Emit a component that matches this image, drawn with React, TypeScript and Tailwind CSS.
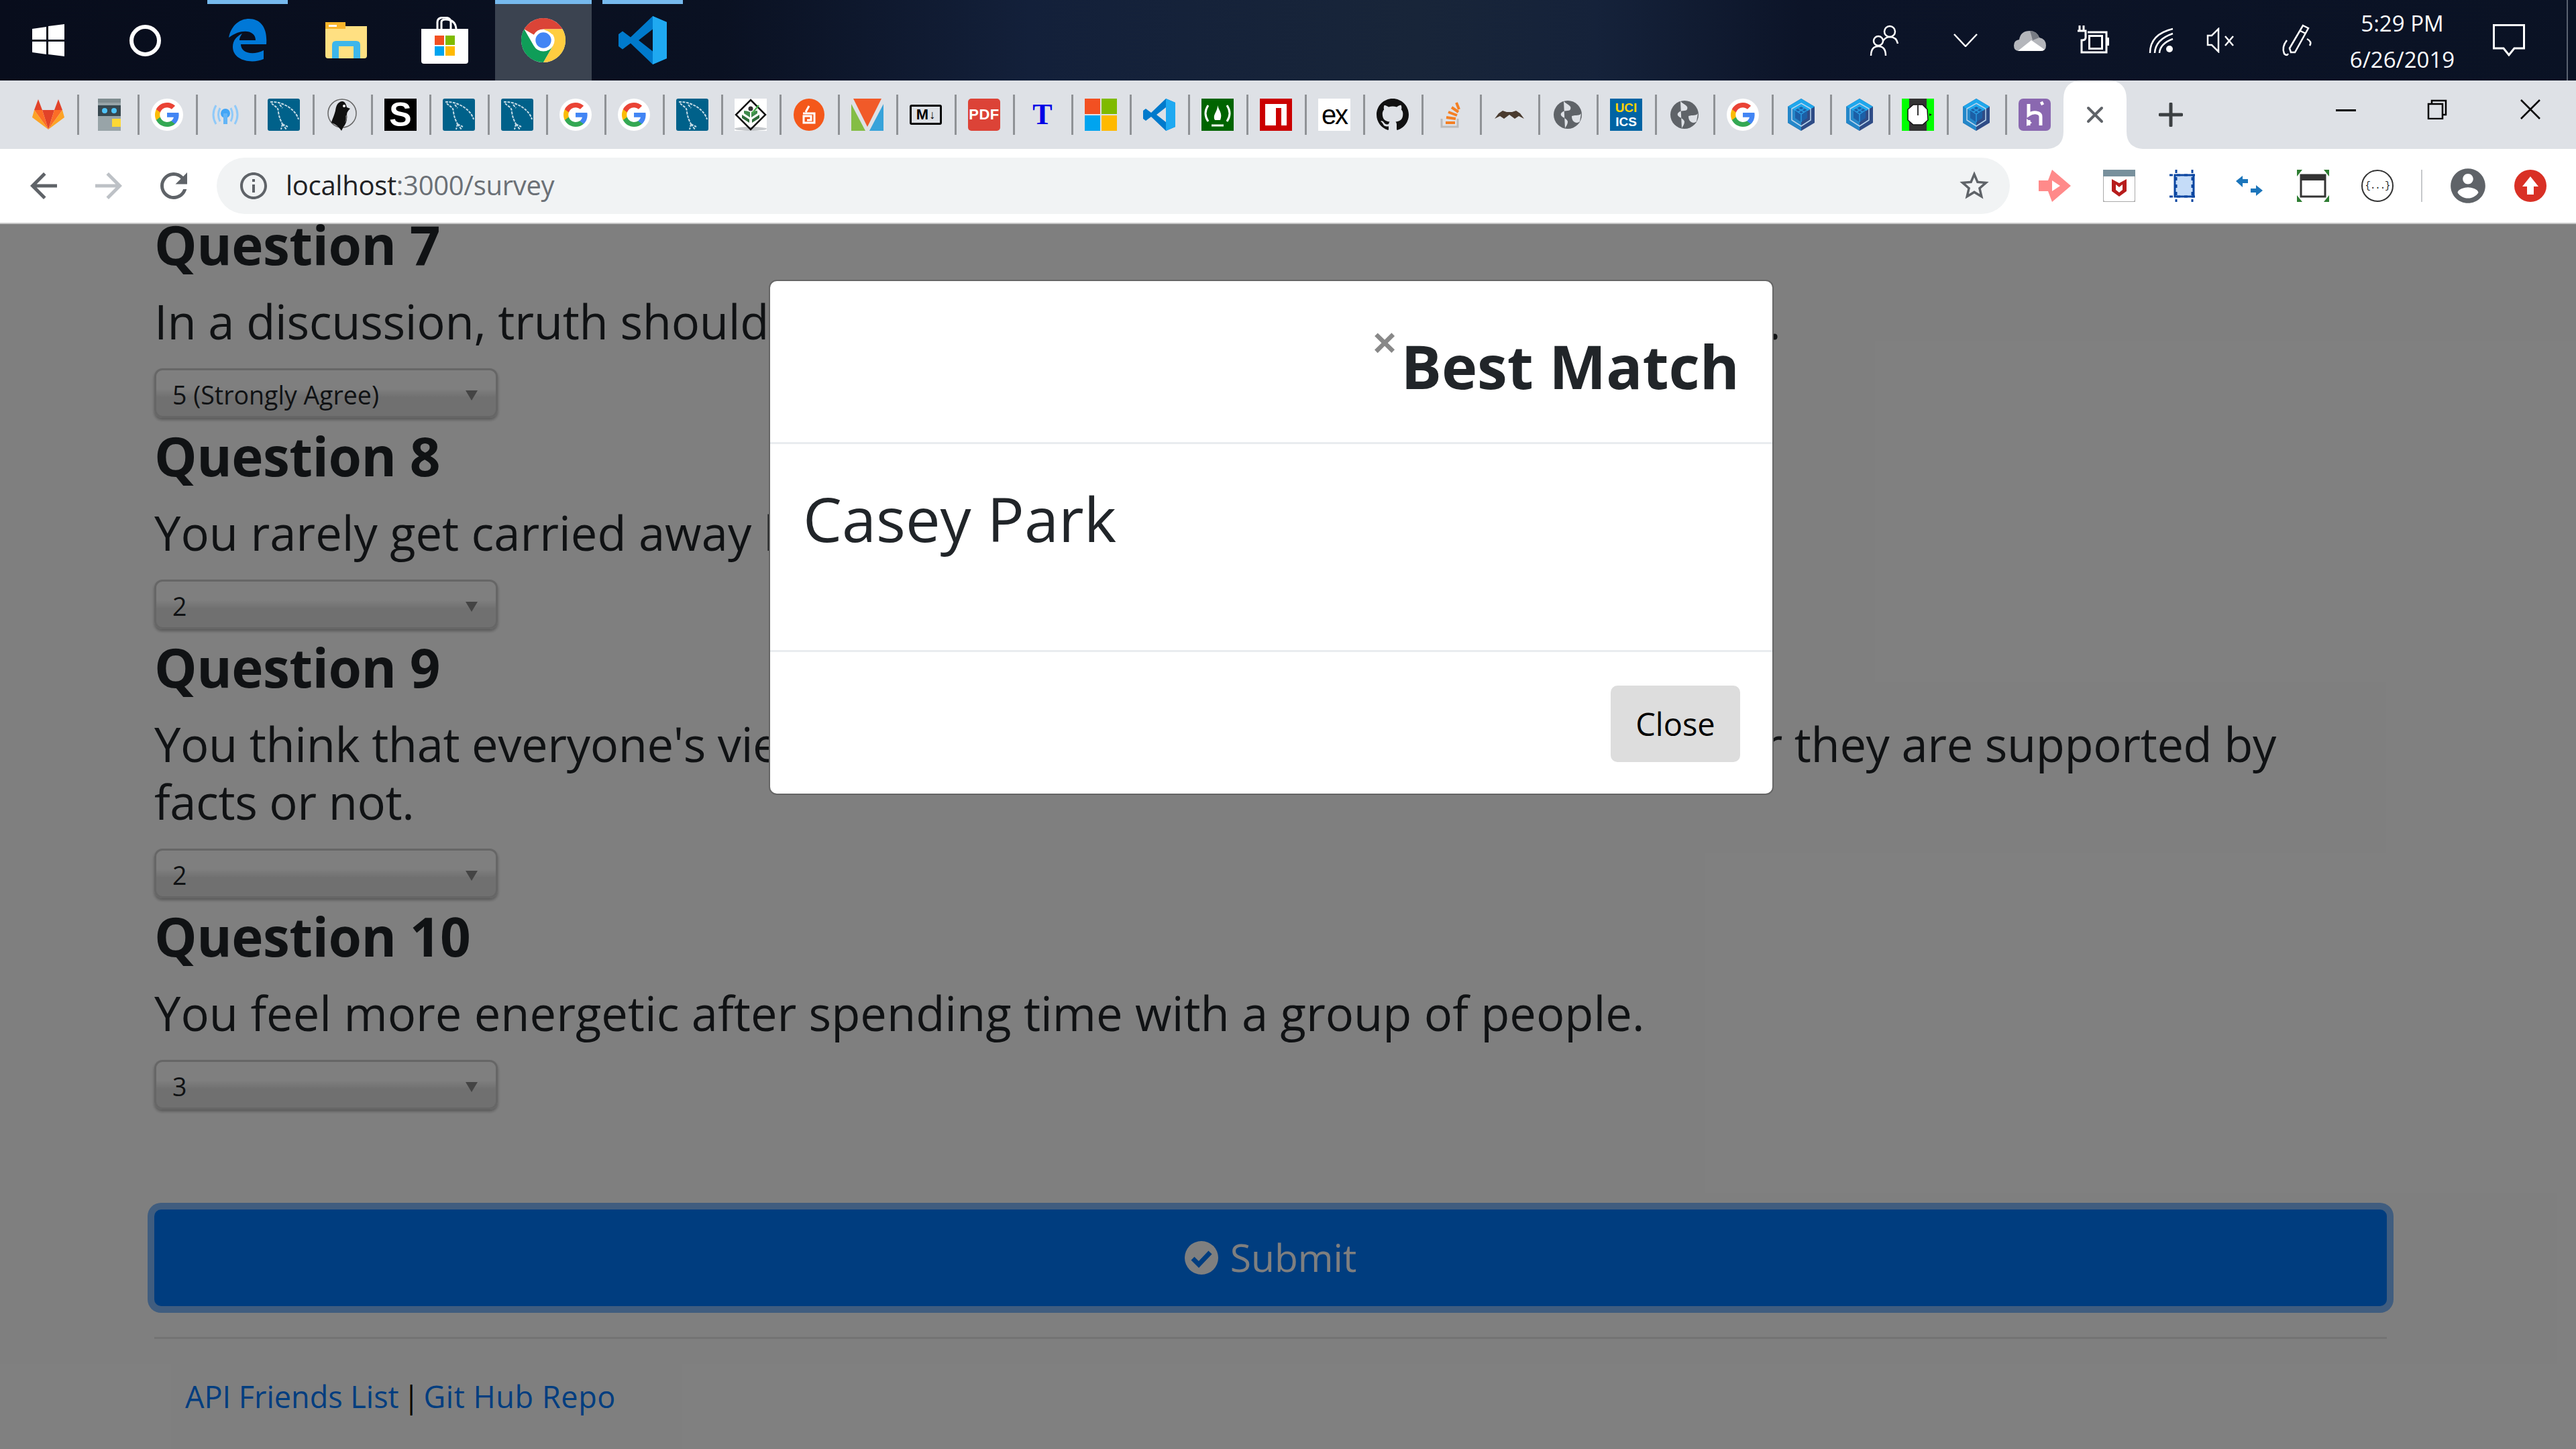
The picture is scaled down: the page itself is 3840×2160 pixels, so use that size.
import type { ReactNode } from 'react';

const FONT = 'font-["Open_Sans","Noto_Sans",sans-serif]';

function Svg({ children, w = 48, h = 48, className = '' }: { children: ReactNode; w?: number; h?: number; className?: string }) {
  return (
    <svg width={w} height={h} viewBox={`0 0 ${w} ${h}`} className={`block shrink-0 ${className}`}>
      {children}
    </svg>
  );
}

const Material = ({ d, size, color }: { d: string; size: number; color: string }) => (
  <svg width={size} height={size} viewBox="0 0 24 24" className="block shrink-0">
    <path d={d} fill={color} />
  </svg>
);

/* bookmark favicons */
const GitLab = () => (
  <Svg>
    <polygon points="24,46 15,17 33,17" fill="#e24329" />
    <polygon points="24,46 15,17 3,17" fill="#fc6d26" />
    <polygon points="24,46 33,17 45,17" fill="#fc6d26" />
    <polygon points="3,17 0,28 24,46" fill="#fca326" />
    <polygon points="45,17 48,28 24,46" fill="#fca326" />
    <polygon points="3,17 9,1 15,17" fill="#e24329" />
    <polygon points="45,17 39,1 33,17" fill="#e24329" />
  </Svg>
);
const Robot = () => (
  <Svg>
    <rect x="8" y="0" width="34" height="48" fill="#98a4a8" />
    <rect x="8" y="0" width="34" height="6" fill="#7f8c90" />
    <rect x="8" y="10" width="34" height="16" fill="#37474f" />
    <circle cx="18" cy="18" r="4" fill="#4fc3f7" />
    <circle cx="32" cy="18" r="4" fill="#4fc3f7" />
    <rect x="29" y="30" width="13" height="12" fill="#fdd835" />
  </Svg>
);
const Google = () => (
  <Svg>
    <ellipse cx="24" cy="24" rx="24" ry="24" fill="#fff" />
    <g transform="translate(6 6) scale(0.75)">
      <path d="M47.5 24.6c0-1.6-.1-3.1-.4-4.6H24v8.900h13.200c-.6 3-2.300 5.600-4.900 7.300v6h7.900c4.600-4.300 7.300-10.500 7.300-17.600z" fill="#4285f4" />
      <path d="M24 48c6.500 0 11.900-2.100 15.900-5.800l-7.900-6c-2.100 1.400-4.900 2.300-8 2.300-6.300 0-11.600-4.200-13.500-9.900H2.400v6.200C6.300 42.600 14.500 48 24 48z" fill="#34a853" />
      <path d="M10.500 28.600c-.5-1.400-.8-3-.8-4.600s.3-3.200.8-4.600v-6.200H2.400C.9 16.500 0 20.100 0 24s.9 7.500 2.400 10.800l8.100-6.200z" fill="#fbbc05" />
      <path d="M24 9.500c3.500 0 6.700 1.200 9.200 3.600l6.900-6.900C35.900 2.400 30.500 0 24 0 14.500 0 6.300 5.400 2.400 13.200l8.100 6.200C12.400 13.700 17.700 9.500 24 9.500z" fill="#ea4335" />
    </g>
  </Svg>
);
const Signal = () => (
  <Svg>
    <path d="M10 10 Q2 24 10 38 M16 14 Q11 24 16 34 M38 10 Q46 24 38 38 M32 14 Q37 24 32 34" fill="none" stroke="#90caf9" strokeWidth="3" />
    <circle cx="24" cy="22" r="7" fill="#42a5f5" />
    <rect x="21" y="22" width="6" height="16" fill="#64b5f6" />
  </Svg>
);
const MySql = () => (
  <Svg>
    <rect width="48" height="48" rx="3" fill="#00618a" />
    <path d="M4 5 C16 4 30 10 38 18 C42 22 45 27 46 31 M6 7 C10 12 16 12 16 20 C17 28 20 34 22 38 M22 38 L20 46 M22 38 L28 46 M22 38 L30 42 M18 9 L22 14" fill="none" stroke="#c6dce6" strokeWidth="2" strokeDasharray="4 1.500" />
  </Svg>
);
const Penguin = () => (
  <Svg>
    <circle cx="24" cy="22" r="21" fill="none" stroke="#666" strokeWidth="1.500" />
    <path d="M24 4 C17 5 15 11 14 18 C12 26 9 31 8 36 C12 37 18 40 23 48 L26 42 C30 38 32 30 31 24 C31 20 33 18 36 15 L31 13 C30 8 28 4 24 4Z" fill="#111" />
    <circle cx="27" cy="11" r="2" fill="#fff" />
    <path d="M31 24 Q32 32 28 36 Q30 30 29 26Z" fill="#666" />
  </Svg>
);
const SBlack = () => (
  <div className="flex h-12 w-12 shrink-0 items-center justify-center bg-black font-['Liberation_Sans',sans-serif] text-[50px] leading-none font-bold text-white">S</div>
);
const Diamond = () => (
  <Svg>
    <rect x="0" y="0" width="48" height="48" fill="#fff" />
    <ellipse cx="24" cy="45" rx="24" ry="3" fill="#c5c8cc" />
    <polygon points="24,2 46,24 24,46 2,24" fill="none" stroke="#111" strokeWidth="2.500" />
    <path d="M11 24 L22 31 V36 L11 29Z M37 24 L26 31 V36 L37 29Z" fill="#2e6b3a" />
    <path d="M14 22 L23 28 V20 Q19 18 14 18Z M34 22 L25 28 V20 Q29 18 34 18Z" fill="#3f8a4d" />
    <circle cx="24" cy="15" r="3.500" fill="#333" />
    <path d="M26 22 L36 10" stroke="#4caf50" strokeWidth="2.500" />
  </Svg>
);
const OrangeCircle = () => (
  <Svg>
    <ellipse cx="24" cy="24" rx="23" ry="24" fill="#f4581a" />
    <path d="M24 11 L19 20 M15 22 H32 V36 H16 V26 H27 V32 H21" fill="none" stroke="#fff" strokeWidth="3" />
  </Svg>
);
const VeeTile = () => (
  <Svg>
    <polygon points="0,8 0,48 21,48" fill="#84bd45" />
    <polygon points="48,8 48,48 27,48" fill="#37a3da" />
    <polygon points="3,0 45,0 24,42" fill="#f15a29" />
  </Svg>
);
const MarkDown = () => (
  <div className="flex h-[30px] w-12 shrink-0 items-center justify-center gap-px rounded-[3px] border-[3px] border-black font-['Liberation_Sans',sans-serif] text-[22px] leading-none font-bold text-black">
    M<span className="text-[18px]">↓</span>
  </div>
);
const Pdf = () => (
  <div className="flex h-12 w-12 shrink-0 items-center justify-center rounded-[5px] bg-[#dc4337] font-['Liberation_Sans',sans-serif] text-[22px] leading-none font-bold tracking-[0.5px] text-white">PDF</div>
);
const SerifT = () => (
  <div className="flex h-12 w-12 shrink-0 items-center justify-center font-['Liberation_Serif',serif] text-[44px] leading-none font-bold text-[#0000e6]">T</div>
);
const Microsoft = () => (
  <Svg>
    <rect width="23" height="23" fill="#f25022" />
    <rect x="25" width="23" height="23" fill="#7fba00" />
    <rect y="25" width="23" height="23" fill="#00a4ef" />
    <rect x="25" y="25" width="23" height="23" fill="#ffb900" />
  </Svg>
);
const VsCode = ({ size = 48 }: { size?: number }) => (
  <svg width={size} height={size} viewBox="0 0 48 48" className="block shrink-0">
    <path d="M34 0 L48 6 V42 L34 48 L12 27 L4 33 L0 30 V18 L4 15 L12 21Z M34 13 L20 24 L34 35Z" fill="#007acc" fillRule="evenodd" />
    <path d="M34 0 L48 6 V42 L34 48Z" fill="#1fa9f1" />
  </svg>
);
const FreeCode = () => (
  <div className="flex h-12 w-12 shrink-0 items-center justify-center bg-[#006400]">
    <svg width="48" height="48" viewBox="0 0 48 48">
      <path d="M10 10 Q2 22 10 34 M38 10 Q46 22 38 34 M15 40 H33" fill="none" stroke="#fff" strokeWidth="3" />
      <path d="M24 10 C26 18 32 22 28 32 H20 C16 24 24 20 24 10Z" fill="#fff" />
    </svg>
  </div>
);
const Npm = () => (
  <Svg>
    <rect width="48" height="48" fill="#cb0000" />
    <rect x="8" y="8" width="32" height="32" fill="#fff" />
    <rect x="24" y="14" width="8" height="26" fill="#cb0000" />
  </Svg>
);
const Express = () => (
  <div className="flex h-12 w-12 shrink-0 items-center justify-center bg-white font-['Liberation_Sans',sans-serif] text-[40px] leading-none tracking-[-2px] text-black">ex</div>
);
const GitHub = () => (
  <svg width="48" height="48" viewBox="0 0 16 16" className="block shrink-0">
    <path fill="#111" d="M8 0C3.580 0 0 3.580 0 8c0 3.540 2.290 6.530 5.470 7.590.4.070.55-.17.55-.38 0-.19-.01-.82-.01-1.490-2.010.37-2.530-.49-2.690-.94-.09-.23-.48-.94-.82-1.130-.28-.15-.68-.52-.01-.53.63-.01 1.080.58 1.230.82.720 1.210 1.870.870 2.330.660.070-.520.280-.870.510-1.070-1.780-.2-3.640-.890-3.640-3.950 0-.870.310-1.590.820-2.150-.08-.2-.36-1.020.08-2.120 0 0 .67-.210 2.200.820.640-.180 1.320-.270 2-.270s1.360.090 2 .270c1.530-1.040 2.200-.820 2.200-.820.440 1.100.160 1.920.080 2.120.510.560.820 1.270.820 2.150 0 3.070-1.870 3.750-3.650 3.950.290.250.540.730.540 1.480 0 1.070-.01 1.930-.01 2.200 0 .210.150.460.550.380A8.010 8.010 0 0016 8c0-4.420-3.580-8-8-8z" />
  </svg>
);
const Stack = () => (
  <Svg>
    <path d="M10 30 V42 H34 V30" fill="none" stroke="#bcbbbb" strokeWidth="3" />
    <path d="M16 36 H30 M17 28 L31 30 M20 20 L33 25 M25 13 L35 20 M32 6 L36 16" fill="none" stroke="#f48024" strokeWidth="4" />
  </Svg>
);
const Mustache = () => (
  <Svg>
    <path d="M2 30 L8 22 L14 18 L20 20 H28 L34 18 L40 22 L46 30 L38 26 L32 30 L24 24 L16 30 L10 26Z" fill="#4a3b2f" />
  </Svg>
);
const Globe = () => (
  <Svg>
    <circle cx="24" cy="24" r="21" fill="#5f6368" />
    <path d="M18 4 C24 10 30 10 28 16 C26 20 18 16 14 22 C12 28 22 28 24 34 C24 40 20 42 20 45 M30 26 C36 24 42 26 44 22 L42 34 C38 38 30 36 30 26Z" fill="#dee1e6" />
  </Svg>
);
const Uci = () => (
  <div className="flex h-12 w-12 shrink-0 flex-col items-center justify-center bg-[#0064a4] font-['Liberation_Sans',sans-serif] text-[19px] leading-[21px] font-bold">
    <span className="text-[#ffd200]">UCI</span>
    <span className="text-white">ICS</span>
  </div>
);
const Cube = () => (
  <Svg>
    <polygon points="24,0 44,12 44,36 24,48 4,36 4,12" fill="#2f4c86" />
    <polygon points="24,0 44,12 24,24 4,12" fill="#1ea7ec" />
    <polygon points="4,12 24,24 24,48 4,36" fill="#2487c9" />
    <polygon points="24,7 38,15 38,32 24,41 10,32 10,15" fill="none" stroke="#b9d4ec" strokeWidth="1.500" />
    <polygon points="24,12 33,17 33,29 24,35 15,29 15,17" fill="#1c5fa6" />
    <path d="M15 17 L24 23 L33 17 M24 23 V35 M19.500 14.500 L28.500 20 M28.500 14.500 L19.500 20" fill="none" stroke="#2a9be0" strokeWidth="1.500" />
  </Svg>
);
const PowerGreen = () => (
  <Svg>
    <rect width="48" height="48" fill="#00ff00" />
    <rect x="11" width="26" height="48" fill="#333" />
    <polygon points="17,9 31,9 38,16 39,32 31,39 17,39 9,32 9,16" fill="#fff" stroke="#111" strokeWidth="1.500" />
    <polygon points="41,22 45,24 41,26" fill="#111" />
    <rect x="23" y="9" width="2" height="16" fill="#333" />
  </Svg>
);
const Heroku = () => (
  <Svg>
    <rect width="48" height="48" rx="7" fill="#8a68b0" />
    <path d="M15 8 V24 C22 19 33 20 33 27 V40 M15 32 V40 M33 8 L37 6" fill="none" stroke="#fff" strokeWidth="5" />
    <polygon points="12,30 12,41 20,36" fill="#fff" />
  </Svg>
);

const bookmarks = [
  GitLab, Robot, Google, Signal, MySql, Penguin, SBlack, MySql, MySql, Google, Google, MySql, Diamond, OrangeCircle,
  VeeTile, MarkDown, Pdf, SerifT, Microsoft, VsCode, FreeCode, Npm, Express, GitHub, Stack, Mustache, Globe, Uci, Globe,
  Google, Cube, Cube, PowerGreen, Cube, Heroku,
];

/* taskbar drawings */
const WindowsLogo = () => (
  <Svg>
    <polygon points="0,7 21,4 21,23 0,23" fill="#fff" />
    <polygon points="24,3 48,0 48,23 24,23" fill="#fff" />
    <polygon points="0,26 21,26 21,45 0,42" fill="#fff" />
    <polygon points="24,26 48,26 48,48 24,45" fill="#fff" />
  </Svg>
);
const EdgeLogo = () => (
  <svg width="60" height="64" viewBox="0 0 60 64" className="block shrink-0">
    <path d="M2 28 C6 8 20 0 32 0 C50 0 60 14 58 38 H20 C20 50 36 56 54 47 V60 C36 68 8 62 8 42 C8 32 14 26 22 22 C18 28 18 30 18 32 H42 C42 16 20 14 2 28Z" fill="#0078d7" />
  </svg>
);
const Explorer = () => (
  <svg width="62" height="54" viewBox="0 0 62 54" className="block shrink-0">
    <path d="M0 4 Q0 0 4 0 H24 L30 6 H62 V50 Q62 54 58 54 H4 Q0 54 0 50Z" fill="#ffe082" />
    <rect x="0" y="0" width="30" height="10" fill="#f9b52b" />
    <rect x="5" y="4" width="12" height="3" fill="#fff" />
    <path d="M10 54 V34 Q10 28 16 28 H46 Q52 28 52 34 V54 H42 V36 H20 V54Z" fill="#3db6eb" />
  </svg>
);
const StoreBag = () => (
  <svg width="70" height="70" viewBox="0 0 70 70" className="block shrink-0">
    <path d="M24 20 V8 Q24 1 34 1 Q44 1 44 8 V20 M30 20 V8 Q30 4 36 4 Q52 4 52 20" fill="none" stroke="#fff" strokeWidth="3" />
    <path d="M0 18 H70 V66 Q70 70 66 70 H4 Q0 70 0 66Z" fill="#fff" />
    <rect x="20" y="28" width="14" height="14" fill="#f25022" />
    <rect x="36" y="28" width="14" height="14" fill="#7fba00" />
    <rect x="20" y="44" width="14" height="14" fill="#00a4ef" />
    <rect x="36" y="44" width="14" height="14" fill="#ffb900" />
  </svg>
);
const ChromeLogo = () => (
  <svg width="66" height="66" viewBox="0 0 48 48" className="block shrink-0">
    <circle cx="24" cy="24" r="24" fill="#fff" />
    <path d="M24 0 A24 24 0 0 1 44.800 12 H24 A12 12 0 0 0 13.600 18 L3.200 12 A24 24 0 0 1 24 0Z" fill="#db4437" />
    <path d="M3.200 12 A24 24 0 0 0 24 48 L34.400 30 A12 12 0 0 1 13.600 30Z" fill="#0f9d58" />
    <path d="M44.800 12 A24 24 0 0 1 24 48 L34.400 30 A12 12 0 0 0 34.400 18 L24 12Z" fill="#ffcd40" />
    <circle cx="24" cy="24" r="11" fill="#fff" />
    <circle cx="24" cy="24" r="8.500" fill="#4285f4" />
  </svg>
);

const FooterLink = ({ children }: { children: ReactNode }) => <a className="text-[#007bff]">{children}</a>;

function Question({ title, text, value, fit = '' }: { title: string; text: string; value: string; fit?: string }) {
  return (
    <section>
      <h2 className="mb-[24px] text-[80px] leading-[96px] font-bold tracking-[-0.5px]">{title}</h2>
      <p className={`mb-[27px] text-[70.500px] leading-[86px] ${fit}`}>{text}</p>
      <div className="relative mb-[8px] flex h-[74px] w-[512px] items-center rounded-[12px] border-[3px] border-[#cccccc] bg-[linear-gradient(#ffffff,#ffffff_40%,#e0e0e0_60%,#e0e0e0)] pt-[6px] pl-[24px] text-[37.500px] shadow-[0_3px_4px_rgba(0,0,0,0.3)]">
        {value}
        <span className="absolute top-[30px] right-[27px] h-0 w-0 border-x-[9px] border-t-[15px] border-x-transparent border-t-[#888]" />
      </div>
    </section>
  );
}

export default function App() {
  return (
    <div className={`flex h-screen w-screen flex-col overflow-hidden bg-white ${FONT}`}>
      {/* windows taskbar */}
      <header className="flex h-[120px] shrink-0 items-center bg-[linear-gradient(90deg,#080d1c_0%,#0a1122_28%,#13203a_40%,#182539_55%,#15223a_62%,#0c1428_70%,#0a1224_100%)] text-white">
        <div className="flex h-full w-[144px] items-center justify-center"><WindowsLogo /></div>
        <div className="flex h-full w-[151px] items-center justify-center pr-[6px]">
          <div className="h-[47px] w-[47px] rounded-full border-[6px] border-white" />
        </div>
        <div className="relative flex h-full w-[147px] items-center justify-center">
          <span className="absolute top-0 left-[14px] h-[6px] w-[120px] bg-[#76b9ed]" />
          <EdgeLogo />
        </div>
        <div className="flex h-full w-[147px] items-center justify-center"><Explorer /></div>
        <div className="flex h-full w-[149px] items-center justify-center pr-[2px]"><StoreBag /></div>
        <div className="relative flex h-full w-[144px] items-center justify-center bg-[#3b4350]">
          <span className="absolute top-0 left-0 h-[6px] w-full bg-[#76b9ed]" />
          <ChromeLogo />
        </div>
        <div className="relative flex h-full w-[151px] items-center justify-center">
          <span className="absolute top-0 left-[16px] h-[6px] w-[120px] bg-[#76b9ed]" />
          <VsCode size={72} />
        </div>
        <div className="ml-auto flex h-full items-center">
          <svg width="44" height="46" viewBox="0 0 44 46" className="block" fill="none" stroke="#fff" strokeWidth="2.500">
            <circle cx="30" cy="10" r="8" />
            <path d="M20 24 Q24 18 30 18 Q40 18 42 28" />
            <circle cx="13" cy="24" r="7" />
            <path d="M2 46 Q2 32 13 32 Q24 32 24 46" />
          </svg>
          <svg width="36" height="20" viewBox="0 0 36 20" className="ml-[81px] block" fill="none" stroke="#fff" strokeWidth="2.500"><path d="M1 1 L18 19 L35 1" /></svg>
          <svg width="48" height="32" viewBox="0 0 48 32" className="ml-[54px] block">
            <path d="M8 32 Q0 32 0 24 Q0 16 8 15 Q10 2 24 2 Q34 2 38 12 Q48 14 48 24 Q48 32 40 32Z" fill="#b4b6bb" />
            <path d="M24 2 Q34 2 38 12 L28 16 Q26 8 24 2Z" fill="#777b84" />
            <path d="M6 32 L26 16 L46 30 Q44 32 40 32Z" fill="#fff" />
          </svg>
          <svg width="48" height="44" viewBox="0 0 48 44" className="ml-[46px] block" fill="none" stroke="#fff" strokeWidth="3">
            <path d="M4 0 V8 M10 0 V8 M1 8 H13 V18 Q13 22 7 22 V40 H44 V10 H16" />
            <rect x="17" y="14" width="22" height="22" fill="#fff" stroke="none" />
            <rect x="20" y="17" width="16" height="16" fill="#0a1122" stroke="none" />
            <rect x="44" y="18" width="4" height="12" fill="#fff" stroke="none" />
          </svg>
          <svg width="38" height="38" viewBox="0 0 38 38" className="ml-[59px] block" fill="none" stroke="#fff" strokeWidth="2.500">
            <path d="M2 38 Q2 10 36 2 M9 38 Q10 18 36 9 M16 38 Q17 24 36 17" />
            <circle cx="31" cy="32" r="5" fill="#fff" stroke="none" />
          </svg>
          <svg width="42" height="38" viewBox="0 0 42 38" className="ml-[48px] block" fill="none" stroke="#fff" strokeWidth="2.500">
            <path d="M2 12 H8 L18 2 V36 L8 26 H2Z" />
            <path d="M28 13 L40 27 M40 13 L28 27" />
          </svg>
          <svg width="48" height="48" viewBox="0 0 48 48" className="ml-[68px] block" fill="none" stroke="#fff" strokeWidth="2.500">
            <path d="M34 2 L42 6 L22 42 L16 42 L14 36Z M30 10 L38 14" />
            <path d="M10 24 Q2 34 6 44 Q10 48 12 44 M40 22 Q48 26 44 32" />
          </svg>
          <div className="ml-[54px] flex w-[160px] flex-col items-center gap-[18px] pt-[3px] text-[33px] leading-[36px]">
            <span>5:29 PM</span>
            <span>6/26/2019</span>
          </div>
          <svg width="48" height="48" viewBox="0 0 48 48" className="ml-[55px] block" fill="none" stroke="#fff" strokeWidth="3">
            <path d="M1.500 1.500 H46.500 V36 H32 L24 46 L16 36 H1.500Z" />
          </svg>
          <div className="ml-[62px] h-full w-[2px] bg-[#5a6270]" />
          <div className="w-[12px]" />
        </div>
      </header>

      {/* bookmarks bar doubling as tab strip */}
      <div className="flex h-[102px] shrink-0 items-center bg-[#dee1e6] pl-[48px]">
        {bookmarks.map((Icon, i) => (
          <div key={i} className="flex h-full shrink-0 items-center">
            <div className="flex w-12 justify-center"><Icon /></div>
            {i < bookmarks.length - 1 && (
              <>
                <div className="ml-[19px] h-[60px] w-[3px] bg-[#8f9296]" />
                <div className={i === 0 ? 'w-[20px]' : 'w-[17px]'} />
              </>
            )}
          </div>
        ))}
        <div className="relative ml-[-5px] flex h-full w-[142px] shrink-0 items-center justify-center">
          <svg width="142" height="102" viewBox="0 0 142 102" className="absolute top-0 left-0 block">
            <path d="M0 102 Q24 100 24 76 V28 Q24 0 52 0 H90 Q118 0 118 28 V76 Q118 100 142 102Z" fill="#fff" />
          </svg>
          <svg width="26" height="26" viewBox="0 0 26 26" className="relative block" fill="none" stroke="#5f6368" strokeWidth="4" strokeLinecap="round">
            <path d="M3 3 L23 23 M23 3 L3 23" />
          </svg>
        </div>
        <svg width="36" height="36" viewBox="0 0 36 36" className="ml-[24px] block shrink-0" fill="none" stroke="#3c4043" strokeWidth="5" strokeLinecap="round">
          <path d="M18 2 V34 M2 18 H34" />
        </svg>
        <div className="ml-auto flex h-full items-start pt-[28px] pr-[53px]">
          <div className="mt-[15px] h-[3px] w-[30px] bg-black" />
          <svg width="30" height="30" viewBox="0 0 30 30" className="ml-[106px] block" fill="none" stroke="#000" strokeWidth="2.500">
            <rect x="2" y="7" width="21" height="22" />
            <path d="M7 7 V2 H28 V23 H23" />
          </svg>
          <svg width="30" height="30" viewBox="0 0 30 30" className="ml-[109px] block" fill="none" stroke="#000" strokeWidth="2.500">
            <path d="M1 1 L29 29 M29 1 L1 29" />
          </svg>
        </div>
      </div>

      {/* address row */}
      <div className="flex h-[110px] shrink-0 items-center bg-white pl-[35px]">
        <Material size={60} color="#5f6368" d="M20 11H7.830l5.590-5.590L12 4l-8 8 8 8 1.410-1.410L7.830 13H20v-2z" />
        <div className="ml-[37px]"><Material size={60} color="#bdc1c6" d="M12 4l-1.410 1.410L16.170 11H4v2h12.170l-5.580 5.590L12 20l8-8z" /></div>
        <div className="ml-[37px]"><Material size={60} color="#5f6368" d="M17.650 6.350C16.200 4.900 14.210 4 12 4c-4.420 0-7.990 3.580-7.990 8s3.570 8 7.990 8c3.730 0 6.840-2.550 7.730-6h-2.080c-.820 2.330-3.040 4-5.650 4-3.310 0-6-2.690-6-6s2.690-6 6-6c1.660 0 3.140.690 4.220 1.780L13 11h7V4l-2.350 2.350z" /></div>
        <div className="ml-[34px] flex h-[84px] w-[2673px] shrink-0 items-center rounded-full bg-[#f1f3f4] pl-[31px]">
          <Material size={48} color="#5f6368" d="M11 7h2v2h-2zm0 4h2v6h-2zm1-9C6.480 2 2 6.480 2 12s4.480 10 10 10 10-4.480 10-10S17.520 2 12 2zm0 18c-4.410 0-8-3.590-8-8s3.590-8 8-8 8 3.590 8 8-3.590 8-8 8z" />
          <span className="ml-[24px] pb-[3px] text-[40px] leading-none tracking-[-0.3px] text-[#202124]">localhost<span className="text-[#6b7076]">:3000/survey</span></span>
          <div className="mr-[27px] ml-auto"><Material size={52} color="#5f6368" d="M22 9.240l-7.190-.620L12 2 9.190 8.630 2 9.240l5.460 4.730L5.820 21 12 17.270 18.180 21l-1.630-7.030L22 9.240zM12 15.400l-3.760 2.270 1-4.280-3.320-2.880 4.380-.380L12 6.100l1.710 4.040 4.380.380-3.320 2.880 1 4.280L12 15.400z" /></div>
        </div>
        <svg width="48" height="48" viewBox="0 0 48 48" className="ml-[43px] block shrink-0">
          <path d="M0 16 H14 L20 0 L48 24 L20 48 L14 32 H0Z" fill="#ff8a8a" />
          <path d="M20 16 L32 24 L20 32Z" fill="#fff" />
        </svg>
        <svg width="48" height="48" viewBox="0 0 48 48" className="ml-[48px] block shrink-0">
          <rect width="48" height="48" rx="3" fill="#fff" stroke="#aaa" strokeWidth="2" />
          <rect width="48" height="10" fill="#78909c" />
          <path d="M13 14 L24 20 L35 14 V32 L24 40 L13 32Z" fill="#b71c1c" />
          <path d="M19 22 L24 26 L29 22 V30 L24 34 L19 30Z" fill="#fff" />
        </svg>
        <svg width="48" height="48" viewBox="0 0 48 48" className="ml-[49px] block shrink-0">
          <rect x="10" y="8" width="28" height="32" fill="#c5dcf8" stroke="#0d47a1" strokeWidth="3" />
          <path d="M2 8 H46 M2 40 H46 M12 0 V48 M36 0 V48" stroke="#0d47a1" strokeWidth="3" strokeDasharray="5 6" fill="none" />
        </svg>
        <svg width="40" height="30" viewBox="0 0 40 30" className="mr-[4px] ml-[53px] block shrink-0">
          <path d="M0 8 L10 0 V5 H18 V11 H10 V17Z M40 22 L30 14 V19 H22 V25 H30 V30Z" fill="#1b75bb" />
        </svg>
        <svg width="48" height="48" viewBox="0 0 48 48" className="ml-[47px] block shrink-0">
          <rect x="6" y="8" width="36" height="32" fill="#fff" stroke="#333" strokeWidth="3" />
          <rect x="6" y="8" width="36" height="8" fill="#333" />
          <path d="M0 0 H8 L0 10Z M48 0 H40 L48 10Z M0 48 H8 L0 38Z M48 48 H40 L48 38Z" fill="#2e7d32" />
        </svg>
        <div className="ml-[48px] flex h-[48px] w-[48px] shrink-0 items-center justify-center rounded-full border-[2px] border-[#333] font-['Liberation_Mono',monospace] text-[14px] leading-none tracking-[-1px] text-[#222]">{'{...}'}</div>
        <div className="ml-[41px] h-[48px] w-[2px] shrink-0 bg-[#c6c8cb]" />
        <div className="ml-[37px]"><Material size={62} color="#5f6368" d="M12 2C6.480 2 2 6.480 2 12s4.480 10 10 10 10-4.480 10-10S17.520 2 12 2zm0 3c1.660 0 3 1.340 3 3s-1.340 3-3 3-3-1.340-3-3 1.340-3 3-3zm0 14.200c-2.500 0-4.710-1.280-6-3.220.030-1.990 4-3.080 6-3.080 1.990 0 5.970 1.090 6 3.080-1.290 1.940-3.500 3.220-6 3.220z" /></div>
        <svg width="48" height="48" viewBox="0 0 48 48" className="ml-[38px] block shrink-0">
          <circle cx="24" cy="24" r="24" fill="#d93025" />
          <path d="M24 10 L36 25 H29 V37 H19 V25 H12Z" fill="#fff" />
        </svg>
      </div>

      {/* survey page, dimmed behind the dialog */}
      <div className="relative min-h-0 flex-1 overflow-hidden border-t-[2px] border-[#c8c8c8] text-[#212529]">
        <main className="mt-[-18px] ml-[230px] w-[3328px]">
          <Question title="Question 7" fit="tracking-[-0.3px]" text="In a discussion, truth should be more important than people's sensitivities." value="5 (Strongly Agree)" />
          <Question title="Question 8" text="You rarely get carried away by fantasies and ideas." value="2" />
          <Question title="Question 9" fit="tracking-[-0.4px]" text="You think that everyone's views should be respected regardless of whether they are supported by facts or not." value="2" />
          <Question title="Question 10" text="You feel more energetic after spending time with a group of people." value="3" />
          <button className="mt-[149px] flex h-[144px] w-full items-center justify-center gap-[18px] rounded-[10px] bg-[#007bff] text-[57px] text-white shadow-[0_0_0_10px_#80bbff]">
            <svg width="50" height="50" viewBox="0 0 50 50" className="block">
              <circle cx="25" cy="25" r="25" fill="#fff" />
              <path d="M12 26 L21 35 L38 17" fill="none" stroke="#007bff" strokeWidth="7" />
            </svg>
            Submit
          </button>
          <hr className="mt-[46px] border-t-[3px] border-[#e6e6e6]" />
          <p className="mt-[50px] pl-[46px] text-[45px] leading-[72px]">
            <FooterLink>API Friends List</FooterLink><span className="mx-[6px] text-black">|</span><a className="tracking-[0.6px] text-[#007bff]">Git Hub Repo</a>
          </p>
        </main>

        <div className="absolute inset-0 bg-black/50" />

        <div role="dialog" className="absolute top-[83px] left-[1146px] flex h-[768px] w-[1498px] flex-col rounded-[12px] border-[2px] border-[#666] bg-white">
          <div className="flex h-[243px] shrink-0 justify-end border-b-[3px] border-[#e9ecef] pt-[66px] pr-[49px]">
            <span className="mt-[-10px] mr-[7px] font-['Liberation_Sans',sans-serif] text-[60px] leading-[72px] font-bold text-[#888]">×</span>
            <h5 className="text-[90px] leading-[120px] font-bold">Best Match</h5>
          </div>
          <div className="flex h-[310px] shrink-0 border-b-[3px] border-[#e9ecef] pt-[53px] pl-[49px] text-[92px] leading-[115px]">Casey Park</div>
          <div className="flex flex-1 justify-end pt-[50px] pr-[48px]">
            <button className="h-[114px] w-[193px] rounded-[10px] bg-[#dddddd] text-[47px] text-black">Close</button>
          </div>
        </div>
      </div>
    </div>
  );
}
